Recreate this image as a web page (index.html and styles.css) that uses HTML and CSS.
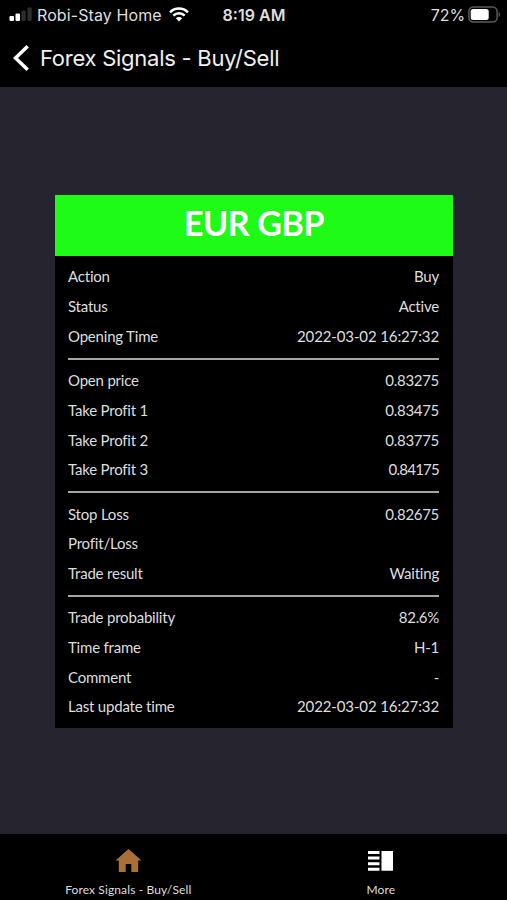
FILE: index.html
```html
<!DOCTYPE html>
<html lang="en">
<head>
<meta charset="utf-8">
<title>Forex Signals - Buy/Sell</title>
<link rel="stylesheet" href="styles.css">
</head>
<body>
<div class="app">
  <div class="status">
    <div class="carrier">
      <svg class="bars" width="23" height="15" viewBox="0 0 23 15"><rect x="0.500" y="9" width="4.500" height="5" rx="1" fill="#fff"/><rect x="6.500" y="6.500" width="4.500" height="7.500" rx="1" fill="#fff"/><rect x="12.500" y="3.500" width="4.200" height="10.500" rx="1" fill="#2e2e2e"/><rect x="18.500" y="0.500" width="4.200" height="13.500" rx="1" fill="#2e2e2e"/></svg>
      <span class="network">Robi-Stay Home</span>
      <svg class="wifi" width="20" height="15" viewBox="0 0 20 15"><g fill="none" stroke="#fff" stroke-width="2.500"><path d="M1 5.300C6 .300 14 .300 19 5.300"/><path d="M4.300 8.700C7.500 5.500 12.500 5.500 15.700 8.700"/></g><path d="M6.800 11.200C8.600 9.500 11.400 9.500 13.200 11.200L10 14.500Z" fill="#fff"/></svg>
    </div>
    <span class="clock">8:19 AM</span>
    <div class="power">
      <span class="percent">72%</span>
      <svg width="33" height="17" viewBox="0 0 33 17"><rect x=".9" y=".9" width="28.200" height="15.200" rx="4.500" fill="none" stroke="#5c5c5c" stroke-width="1.500"/><rect x="2.700" y="2.900" width="18" height="11" rx="2.500" fill="#fff"/><path d="M30.700 5.700Q33.500 8.500 30.700 11.300Z" fill="#5c5c5c"/></svg>
    </div>
  </div>
  <header class="nav">
    <svg class="back" width="17" height="28" viewBox="0 0 17 28"><path d="M14.700 2.200L2.500 14L14.700 25.800" fill="none" stroke="#fff" stroke-width="3.500"/></svg>
    <h1 class="title">Forex Signals - Buy/Sell</h1>
  </header>
  <main class="content">
    <section class="card">
      <h2 class="pair"><span>EUR GBP</span></h2>
      <div class="rows">
        <div class="row"><span>Action</span><span>Buy</span></div>
        <div class="row"><span>Status</span><span>Active</span></div>
        <div class="row"><span>Opening Time</span><span class="date">2022-03-02 16:27:32</span></div>
        <div class="divider"></div>
        <div class="row"><span>Open price</span><span class="num">0.83275</span></div>
        <div class="row"><span>Take Profit 1</span><span class="num">0.83475</span></div>
        <div class="row"><span>Take Profit 2</span><span class="num">0.83775</span></div>
        <div class="row"><span>Take Profit 3</span><span class="num narrow">0.84175</span></div>
        <div class="divider"></div>
        <div class="row"><span>Stop Loss</span><span class="num">0.82675</span></div>
        <div class="row"><span>Profit/Loss</span><span></span></div>
        <div class="row"><span>Trade result</span><span>Waiting</span></div>
        <div class="divider"></div>
        <div class="row"><span>Trade probability</span><span class="num">82.6%</span></div>
        <div class="row"><span>Time frame</span><span>H-1</span></div>
        <div class="row"><span>Comment</span><span>-</span></div>
        <div class="row"><span>Last update time</span><span class="date">2022-03-02 16:27:32</span></div>
      </div>
    </section>
  </main>
  <footer class="tabs">
    <div class="tab">
      <svg width="27" height="26" viewBox="0 0 27 26"><path d="M13.500 1L26.500 12.500H23.200V24H16.300V16H10.700V24H3.800V12.500H.5Z" fill="#a96f38"/></svg>
      <span>Forex Signals - Buy/Sell</span>
    </div>
    <div class="tab">
      <svg width="27" height="26" viewBox="0 0 27 26"><path d="M1 3H12.500V6H1ZM1 8.600H12.500V11.600H1ZM1 14.200H12.500V17.200H1ZM1 19.800H12.500V22.800H1ZM14.500 3H26V22.800H14.500Z" fill="#fff"/></svg>
      <span>More</span>
    </div>
  </footer>
</div>
</body>
</html>
```
FILE: styles.css
```css
* { box-sizing: border-box; }
body { margin: 0; background: #000; }
.app {
  display: flex;
  flex-direction: column;
  height: 900px;
  background: #000;
  color: #dedede;
  font-family: Inter, "Liberation Sans", sans-serif;
}
.status {
  display: grid;
  grid-template-columns: 1fr auto 1fr;
  align-items: center;
  height: 29px;
  padding: 0 6px 0 9px;
  line-height: 20px;
}
.carrier, .power { display: flex; align-items: center; }
.network { margin-left: 5px; font-size: 16px; letter-spacing: 0.1px; }
.wifi { margin-left: 7px; }
.clock { margin-right: 2px; font-size: 16px; font-weight: 600; }
.power { justify-content: flex-end; gap: 3px; font-size: 16px; }
.percent { letter-spacing: -0.1px; }
.nav {
  display: flex;
  align-items: center;
  height: 58px;
  padding: 0 13px 1px;
}
.title {
  margin: 0 0 0 10px;
  color: #f0f0f0;
  font-size: 22px;
  font-weight: 400;
  letter-spacing: -0.26px;
  line-height: 30px;
}
.content {
  flex: 1;
  padding: 108px 54px 0 55px;
  background: #25242f;
}
.card { height: 533px; background: #000; font-family: Lato, sans-serif; }
.pair {
  height: 61px;
  margin: 0;
  padding-top: 6px;
  background: #1dfb17;
  color: #fff;
  font-size: 34px;
  font-weight: 700;
  letter-spacing: -0.4px;
  line-height: 44px;
  text-align: center;
}
.rows { padding: 5.6px 14px 0 13px; }
.row {
  display: flex;
  justify-content: space-between;
  align-items: center;
  height: 29.67px;
  font-size: 15px;
  letter-spacing: -0.2px;
  line-height: 20px;
  white-space: nowrap;
}
.date { letter-spacing: -0.12px; }
.num { letter-spacing: -0.3px; }
.narrow { letter-spacing: -0.75px; }
.divider { height: 14.83px; padding-top: 7px; }
.divider::before { content: ""; display: block; height: 2px; background: #a6a6a6; }
.tabs { display: flex; height: 66px; font-family: Lato, sans-serif; }
.tab {
  display: flex;
  flex: 1;
  flex-direction: column;
  align-items: center;
  padding-top: 14px;
  font-size: 12px;
  letter-spacing: 0.12px;
  line-height: 16px;
}
.tab:first-child { padding-left: 2px; }
.tab span { margin-top: 8px; }
```
